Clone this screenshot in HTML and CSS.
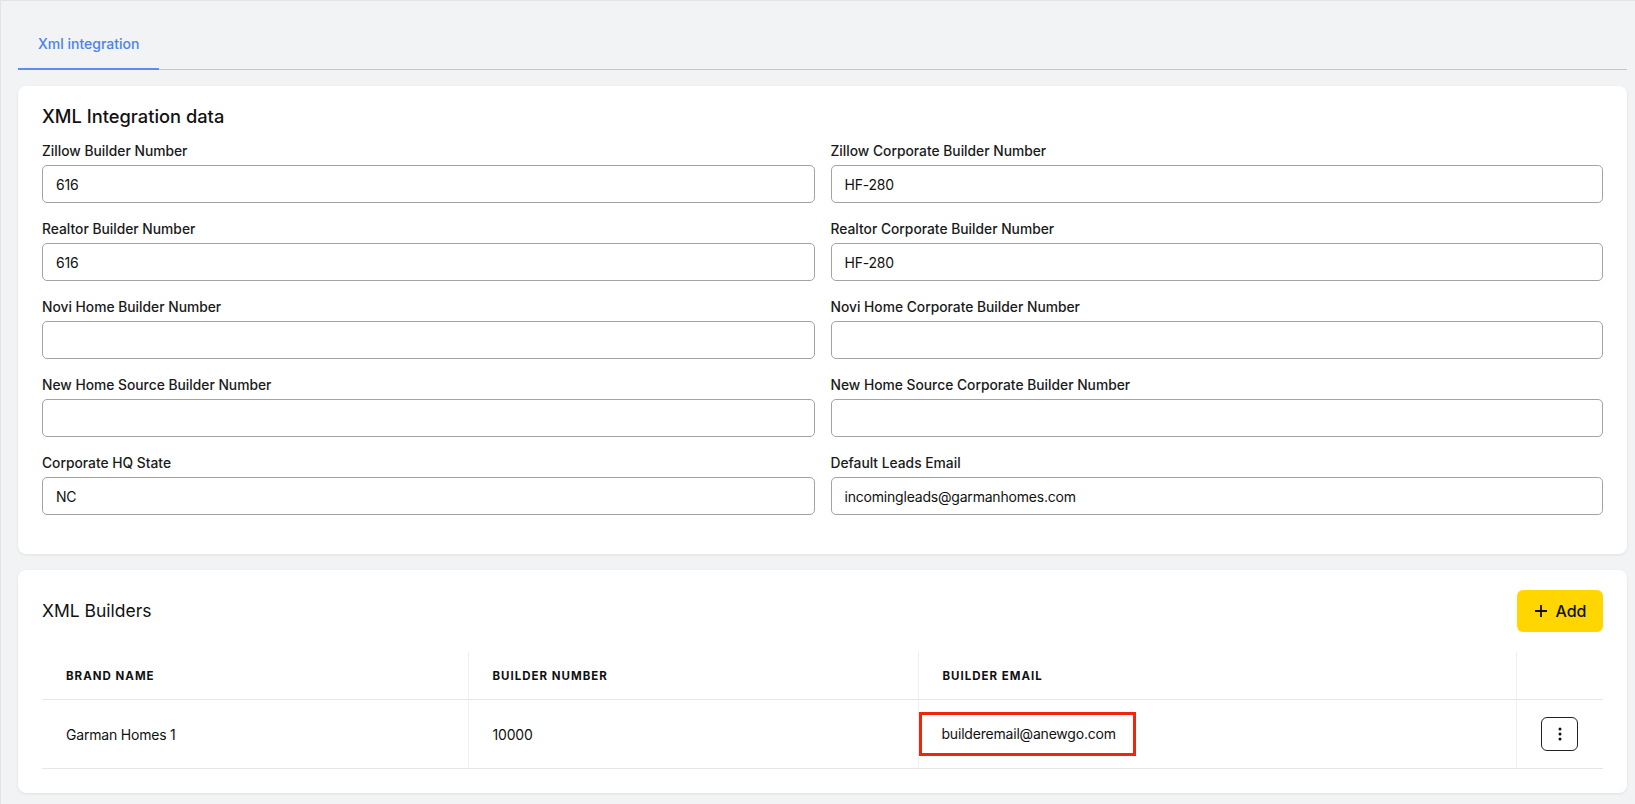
FILE: index.html
```html
<!DOCTYPE html>
<html lang="en">
<head>
  <meta charset="UTF-8">
  <title>Xml integration</title>
  <link rel="stylesheet" href="styles.css">
</head>
<body>
  <div class="page">
    <div class="tabs">
      <div class="tab active">Xml integration</div>
    </div>

    <div class="card">
      <h2 class="card-title">XML Integration data</h2>
      <div class="form-grid">
        <div class="field">
          <label>Zillow Builder Number</label>
          <input type="text" value="616">
        </div>
        <div class="field">
          <label>Zillow Corporate Builder Number</label>
          <input type="text" value="HF-280">
        </div>
        <div class="field">
          <label>Realtor Builder Number</label>
          <input type="text" value="616">
        </div>
        <div class="field">
          <label>Realtor Corporate Builder Number</label>
          <input type="text" value="HF-280">
        </div>
        <div class="field">
          <label>Novi Home Builder Number</label>
          <input type="text" value="">
        </div>
        <div class="field">
          <label>Novi Home Corporate Builder Number</label>
          <input type="text" value="">
        </div>
        <div class="field">
          <label>New Home Source Builder Number</label>
          <input type="text" value="">
        </div>
        <div class="field">
          <label>New Home Source Corporate Builder Number</label>
          <input type="text" value="">
        </div>
        <div class="field">
          <label>Corporate HQ State</label>
          <input type="text" value="NC">
        </div>
        <div class="field">
          <label>Default Leads Email</label>
          <input type="text" value="incomingleads@garmanhomes.com">
        </div>
      </div>
    </div>

    <div class="card card-builders">
      <div class="card-head">
        <h2 class="card-title">XML Builders</h2>
        <button class="btn-add">
          <svg width="14" height="14" viewBox="0 0 14 14"><path d="M7 1v12M1 7h12" stroke="#111" stroke-width="1.8" fill="none"/></svg>
          Add
        </button>
      </div>
      <table class="builders">
        <thead>
          <tr>
            <th class="col-brand">Brand name</th>
            <th class="col-number">Builder number</th>
            <th class="col-email">Builder email</th>
            <th class="col-actions"></th>
          </tr>
        </thead>
        <tbody>
          <tr>
            <td>Garman Homes 1</td>
            <td>10000</td>
            <td class="email-cell"><span class="highlight">builderemail@anewgo.com</span></td>
            <td class="actions-cell">
              <button class="btn-more">
                <svg width="4" height="14" viewBox="0 0 4 14"><circle cx="2" cy="2" r="1.5" fill="#111"/><circle cx="2" cy="7" r="1.5" fill="#111"/><circle cx="2" cy="12" r="1.5" fill="#111"/></svg>
              </button>
            </td>
          </tr>
        </tbody>
      </table>
    </div>
  </div>
</body>
</html>
```

FILE: styles.css
```css
body {
  margin: 0;
  font-family: Inter, "Noto Sans", sans-serif;
  color: #111;
  background: #f2f3f5;
}
.page {
  min-height: 803px;
  border-top: 1px solid #e3e4e7;
  border-left: 1px solid #e3e4e7;
  padding: 17px 8px 0 17px;
}
.tabs {
  display: flex;
  border-bottom: 1px solid #c6c7ca;
}
.tab {
  padding: 16px 20px 14px;
  font-size: 14px;
  line-height: 20px;
  font-weight: 500;
  color: #4a82ee;
  margin-bottom: -1px;
}
.tab.active {
  border-bottom: 2px solid #5b8def;
}
.card {
  background: #fff;
  border-radius: 8px;
  box-shadow: 0 1px 3px rgba(0,0,0,0.08);
  margin-top: 16px;
  padding: 16px 24px 39px;
}
.card-title {
  margin: 0 0 11px 0;
  font-size: 18.3px;
  line-height: 28px;
  font-weight: 500;
}
.form-grid {
  display: grid;
  grid-template-columns: 1fr 1fr;
  column-gap: 16px;
  row-gap: 16px;
}
.field label {
  display: block;
  font-size: 13.8px;
  line-height: 20px;
  font-weight: 500;
  color: #1a1a1a;
  margin-bottom: 4px;
}
.field input {
  display: block;
  box-sizing: border-box;
  width: 100%;
  height: 38px;
  border: 1px solid #a3a3a3;
  border-radius: 5px;
  padding: 0 13px;
  font-family: inherit;
  font-size: 14px;
  letter-spacing: -0.2px;
  color: #111;
  background: #fff;
}
.card-builders {
  margin-top: 16px;
  padding: 20px 24px 24px;
}
.card-head {
  display: flex;
  justify-content: space-between;
  align-items: center;
  margin-bottom: 20px;
}
.card-head .card-title {
  margin: 0;
  font-size: 17.5px;
  font-weight: 400;
}
.btn-add {
  display: flex;
  align-items: center;
  gap: 8px;
  height: 42px;
  width: 86px;
  justify-content: center;
  background: #ffd600;
  border: none;
  border-radius: 6px;
  font-family: inherit;
  font-size: 16px;
  font-weight: 500;
  color: #111;
  cursor: pointer;
}
.builders {
  width: 100%;
  border-collapse: collapse;
}
.builders th {
  text-align: left;
  font-size: 11.5px;
  font-weight: 700;
  letter-spacing: 1px;
  text-transform: uppercase;
  height: 47px;
  padding: 0 24px;
  border-bottom: 1px solid #e5e6e8;
}
.builders td {
  height: 68px;
  padding: 0 24px;
  font-size: 14px;
  letter-spacing: -0.2px;
  border-bottom: 1px solid #e5e6e8;
}
.builders th + th,
.builders td + td {
  border-left: 1px solid #eeeff1;
}
.col-brand { width: 426px; box-sizing: border-box; }
.col-number { width: 450px; box-sizing: border-box; }
.col-email { width: 598px; box-sizing: border-box; }
.builders td.email-cell {
  padding-left: 0;
}
.highlight {
  display: inline-block;
  border: 3px solid #f0260c;
  padding: 9px 17px 9px 20px;
  line-height: 20px;
}
.actions-cell {
  text-align: center;
}
.btn-more {
  width: 37px;
  height: 34px;
  border: 1px solid #222;
  border-radius: 6px;
  background: #fff;
  display: inline-flex;
  align-items: center;
  justify-content: center;
  padding: 0;
  cursor: pointer;
}
```
